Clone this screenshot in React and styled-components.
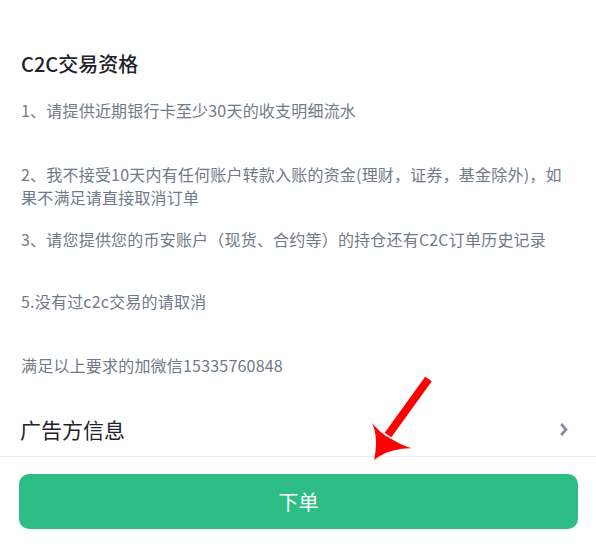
import React from "react"
import styled, { createGlobalStyle } from "styled-components"

const GlobalStyle = createGlobalStyle`
  body {
    margin: 0;
    background: #fff;
    font-family: "Noto Sans CJK SC", "Noto Sans", sans-serif;
  }
`

const Page = styled.div`
  position: relative;
  width: 596px;
  height: 550px;
  overflow: hidden;
  background: #fff;
`

const Content = styled.div`
  padding: 49px 20px 0 21px;
`

const Title = styled.h2`
  margin: 0;
  font-size: 20px;
  line-height: 30px;
  font-weight: 500;
  color: #1e2329;
`

const Para = styled.p`
  margin: ${props => props.$gap}px 0 0;
  font-size: 16px;
  line-height: 23px;
  color: #707a8a;
  letter-spacing: 0.2px;
`

const AdRow = styled.div`
  display: flex;
  align-items: center;
  justify-content: space-between;
  height: 54px;
  margin-top: 25px;
  padding: 0 27px 0 20px;
  font-size: 21px;
  color: #1e2329;
`

const Footer = styled.div`
  border-top: 1px solid #eaecef;
  padding: 17px 18px 0 19px;
`

const OrderButton = styled.button`
  display: flex;
  align-items: center;
  justify-content: center;
  width: 100%;
  height: 55px;
  border: none;
  border-radius: 10px;
  background: #2ebd85;
  color: #fff;
  font-family: inherit;
  font-size: 20px;
`

const Arrow = styled.svg`
  position: absolute;
  left: 360px;
  top: 370px;
`

const Chevron = () => (
  <svg width="10" height="15" viewBox="0 0 10 15">
    <path d="M2.2 2 L7 7.5 L2.2 13" fill="none" stroke="#848e9c" strokeWidth="2.8" />
  </svg>
)

export default function App() {
  return (
    <Page>
      <GlobalStyle />
      <Content>
        <Title>C2C交易资格</Title>
        <Para $gap={20}>1、请提供近期银行卡至少30天的收支明细流水</Para>
        <Para $gap={41}>
          2、我不接受10天内有任何账户转款入账的资金(理财，证券，基金除外)，如果不满足请直接取消订单
        </Para>
        <Para $gap={19}>3、请您提供您的币安账户（现货、合约等）的持仓还有C2C订单历史记录</Para>
        <Para $gap={39}>5.没有过c2c交易的请取消</Para>
        <Para $gap={41}>满足以上要求的加微信15335760848</Para>
      </Content>
      <AdRow>
        <span>广告方信息</span>
        <Chevron />
      </AdRow>
      <Footer>
        <OrderButton>下单</OrderButton>
      </Footer>
      <Arrow width="80" height="100" viewBox="0 0 80 100">
        <polygon points="71.8,11.2 65.2,6.8 24.7,62.8 31.3,67.2" fill="#ff0000" />
        <path d="M14 90 C17 78 17 62 11.7 52.7 C18 60 24 65 28 67 C36 72 44 76 51.7 78.3 C38 78 24 82 14 90 Z" fill="#ff0000" />
      </Arrow>
    </Page>
  )
}
